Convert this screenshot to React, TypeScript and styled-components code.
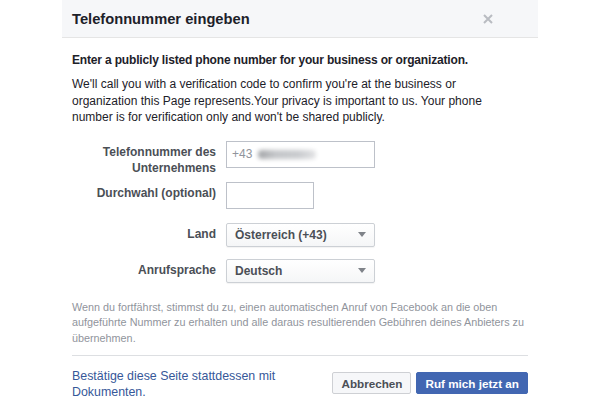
import React from "react";
import styled, { createGlobalStyle } from "styled-components";

const GlobalStyle = createGlobalStyle`
  html, body {
    margin: 0;
    padding: 0;
    background: #ffffff;
  }
  body {
    font-family: "Liberation Sans", Arial, Helvetica, sans-serif;
    font-size: 12px;
    color: #1d2129;
  }
`;

const Dialog = styled.div`
  width: 476px;
  margin-left: 62px;
  background: #ffffff;
`;

const Header = styled.div`
  box-sizing: border-box;
  height: 38px;
  display: flex;
  align-items: center;
  justify-content: space-between;
  padding: 1px 10px 0 10px;
  background: #f6f7f9;
  border-bottom: 1px solid #e5e5e5;
`;

const Title = styled.h1`
  margin: 0;
  font-size: 14.7px;
  font-weight: bold;
  color: #1d2129;
  line-height: 19px;
`;

const Close = styled.button`
  width: 20px;
  height: 20px;
  border: 0;
  padding: 0;
  margin-right: 30px;
  background: transparent;
  display: flex;
  align-items: center;
  justify-content: center;
`;

const Body = styled.div`
  padding: 14px 10px 0 10px;
`;

const Lead = styled.div`
  font-weight: bold;
  line-height: 16px;
  letter-spacing: -0.17px;
  color: #1d2129;
`;

const Paragraph = styled.p`
  margin: 8px 0 0 0;
  line-height: 16.5px;
  color: #1d2129;
`;

const Form = styled.div`
  display: flex;
  flex-direction: column;
  margin-top: 15px;
`;

const Row = styled.div<{ $height: number }>`
  display: flex;
  align-items: flex-start;
  gap: 10px;
  height: ${({ $height }) => $height}px;
`;

const Label = styled.label`
  width: 144px;
  flex: none;
  text-align: right;
  font-weight: bold;
  color: #4b4f56;
  line-height: 16px;
  padding-top: 3px;
`;

const TextBox = styled.div<{ $width: number }>`
  box-sizing: border-box;
  width: ${({ $width }) => $width}px;
  height: 27px;
  border: 1px solid #bdc1c9;
  background: #ffffff;
  display: flex;
  align-items: center;
  padding: 0 5px;
  color: #90949c;
  font-size: 12px;
`;

const Smudge = styled.span`
  display: inline-block;
  width: 58px;
  height: 9px;
  margin-left: 6px;
  margin-top: 1px;
  border-radius: 4px;
  background: linear-gradient(90deg, #a3a5a8 0%, #c4c6c9 30%, #c9cbce 70%, #e2e3e5 100%);
  filter: blur(2px);
`;

const Select = styled.div`
  box-sizing: border-box;
  width: 149px;
  height: 24px;
  border: 1px solid #ccd0d5;
  border-radius: 2px;
  background: linear-gradient(#ffffff, #f5f6f7);
  display: flex;
  align-items: center;
  justify-content: space-between;
  padding: 0 8px 0 8px;
  font-weight: bold;
  color: #4b4f56;
  box-shadow: 0 1px 1px rgba(0, 0, 0, 0.05);
`;

const Caret = styled.span`
  width: 0;
  height: 0;
  border-left: 4px solid transparent;
  border-right: 4px solid transparent;
  border-top: 5px solid #7f8389;
`;

const Notice = styled.p`
  margin: 17px 0 0 0;
  font-size: 10.8px;
  line-height: 15.5px;
  color: #90949c;
  white-space: nowrap;
`;

const Divider = styled.div`
  height: 1px;
  background: #dddfe2;
  margin-top: 9px;
`;

const Footer = styled.div`
  display: flex;
  align-items: flex-start;
  justify-content: space-between;
  padding-top: 13px;
`;

const DocsLink = styled.a`
  color: #365899;
  font-size: 12.4px;
  line-height: 15.5px;
  text-decoration: none;
  cursor: pointer;
`;

const Buttons = styled.div`
  display: flex;
  gap: 5px;
  margin-top: 3px;
`;

const Button = styled.button<{ $primary?: boolean }>`
  box-sizing: border-box;
  height: 22px;
  padding: 0 8px;
  border-radius: 2px;
  font-family: "Liberation Sans", Arial, sans-serif;
  font-size: 11.7px;
  font-weight: bold;
  border: 1px solid ${({ $primary }) => ($primary ? "#4267b2" : "#ced0d4")};
  background: ${({ $primary }) => ($primary ? "#4267b2" : "#f6f7f9")};
  color: ${({ $primary }) => ($primary ? "#ffffff" : "#4b4f56")};
`;

export default function App() {
  return (
    <>
      <GlobalStyle />
      <Dialog>
        <Header>
          <Title>Telefonnummer eingeben</Title>
          <Close aria-label="Schließen">
            <svg width="10" height="10" viewBox="0 0 10 10">
              <path d="M1 1 L9 9 M9 1 L1 9" stroke="#b9bcc2" strokeWidth="2" />
            </svg>
          </Close>
        </Header>
        <Body>
          <Lead>Enter a publicly listed phone number for your business or organization.</Lead>
          <Paragraph>
            We'll call you with a verification code to confirm you're at the business or
            <br />
            organization this Page represents.Your privacy is important to us. Your phone
            <br />
            number is for verification only and won't be shared publicly.
          </Paragraph>
          <Form>
            <Row $height={41}>
              <Label>
                Telefonnummer des
                <br />
                Unternehmens
              </Label>
              <TextBox $width={149}>
                +43
                <Smudge />
              </TextBox>
            </Row>
            <Row $height={41}>
              <Label>Durchwahl (optional)</Label>
              <TextBox $width={88} />
            </Row>
            <Row $height={36}>
              <Label>Land</Label>
              <Select>
                Österreich (+43)
                <Caret />
              </Select>
            </Row>
            <Row $height={24}>
              <Label>Anrufsprache</Label>
              <Select>
                Deutsch
                <Caret />
              </Select>
            </Row>
          </Form>
          <Notice>
            Wenn du fortfährst, stimmst du zu, einen automatischen Anruf von Facebook an die oben
            <br />
            aufgeführte Nummer zu erhalten und alle daraus resultierenden Gebühren deines Anbieters zu
            <br />
            übernehmen.
          </Notice>
          <Divider />
          <Footer>
            <DocsLink>
              Bestätige diese Seite stattdessen mit
              <br />
              Dokumenten.
            </DocsLink>
            <Buttons>
              <Button>Abbrechen</Button>
              <Button $primary>Ruf mich jetzt an</Button>
            </Buttons>
          </Footer>
        </Body>
      </Dialog>
    </>
  );
}
